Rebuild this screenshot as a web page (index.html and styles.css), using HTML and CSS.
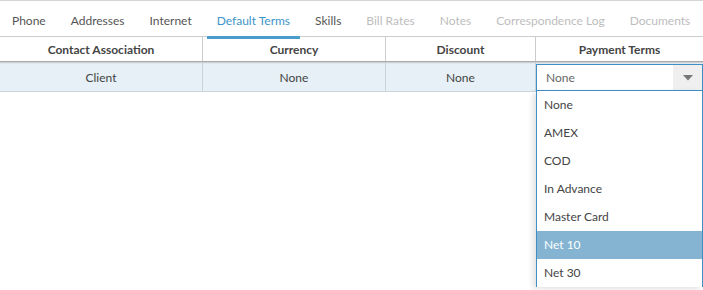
FILE: index.html
```html
<!DOCTYPE html>
<html>
<head>
<meta charset="utf-8">
<link rel="stylesheet" href="styles.css">
</head>
<body>
<div class="page">
  <nav class="tabs">
    <span class="tab">Phone</span>
    <span class="tab">Addresses</span>
    <span class="tab">Internet</span>
    <span class="tab active">Default Terms</span>
    <span class="tab">Skills</span>
    <span class="tab disabled">Bill Rates</span>
    <span class="tab disabled">Notes</span>
    <span class="tab disabled">Correspondence Log</span>
    <span class="tab disabled">Documents</span>
  </nav>
  <div class="grid">
    <div class="head">
      <div class="cell">Contact Association</div>
      <div class="cell">Currency</div>
      <div class="cell">Discount</div>
      <div class="cell">Payment Terms</div>
    </div>
    <div class="row">
      <div class="cell">Client</div>
      <div class="cell">None</div>
      <div class="cell">None</div>
      <div class="cell editor">
        <div class="select">
          <span class="value">None</span>
          <span class="arrow"><svg width="10" height="6" viewBox="0 0 10 6"><path d="M0 0H10L5 5.5Z" fill="#777"/></svg></span>
        </div>
        <ul class="list">
          <li>None</li>
          <li>AMEX</li>
          <li>COD</li>
          <li>In Advance</li>
          <li>Master Card</li>
          <li class="hover">Net 10</li>
          <li>Net 30</li>
        </ul>
      </div>
    </div>
  </div>
</div>
</body>
</html>
```
FILE: styles.css
```css
html, body {
  margin: 0;
  padding: 0;
  background: #fff;
}
body {
  font-family: Lato, "Liberation Sans", sans-serif;
  font-size: 12px;
  color: #444;
  width: 703px;
  height: 290px;
  overflow: hidden;
}
.page {
  border-top: 1px solid #d4d4d4;
}
.tabs {
  display: flex;
  height: 35px;
  border-bottom: 1px solid #cccccc;
  padding-left: 2px;
  gap: 5px;
}
.tab {
  display: flex;
  align-items: center;
  padding: 4px 10px 0;
  color: #555;
  height: 31px;
  border-bottom: 3px solid transparent;
  margin-bottom: -1px;
  white-space: nowrap;
}
.tab.active {
  color: #3d94c8;
  border-bottom-color: #4a9ccd;
}
.tab.disabled {
  color: #bdbdbd;
}
.head, .row {
  display: grid;
  grid-template-columns: 202px 183px 150px 168px;
}
.head {
  height: 24px;
  border-bottom: 1px solid #a9a9a9;
  box-shadow: 0 1px 1px rgba(0,0,0,0.18);
  font-weight: bold;
  color: #444;
  position: relative;
  z-index: 1;
}
.head .cell {
  display: flex;
  align-items: center;
  justify-content: center;
}
.cell + .cell {
  border-left: 1px solid #cccccc;
}
.row {
  height: 28px;
  margin-top: 1px;
  background: #e6f0f6;
  border-bottom: 1px solid #cdd5da;
}
.row .cell {
  display: flex;
  align-items: center;
  justify-content: center;
  color: #444;
}
.row .cell + .cell {
  border-left-color: #c9d3d8;
}
.editor {
  position: relative;
  align-items: flex-start !important;
  justify-content: flex-start !important;
}
.select {
  box-sizing: border-box;
  width: 167px;
  height: 27px;
  margin-top: 1px;
  border: 1px solid #3f8fc6;
  background: #fff;
  display: flex;
  align-items: center;
  justify-content: space-between;
}
.value {
  padding-left: 9px;
  color: #666;
}
.arrow {
  width: 29px;
  height: 100%;
  background: #efefef;
  display: flex;
  align-items: center;
  justify-content: center;
}
.list {
  position: absolute;
  left: 0;
  top: 28px;
  width: 167px;
  box-sizing: border-box;
  margin: 0;
  padding: 0;
  list-style: none;
  background: #fff;
  border-left: 1px solid #3f8fc6;
  border-right: 1px solid #3f8fc6;
  box-shadow: -3px 2px 6px rgba(0,0,0,0.12);
  z-index: 5;
}
.list li {
  height: 28px;
  line-height: 28px;
  padding-left: 7px;
  color: #444;
}
.list li.hover {
  background: #84b4d2;
  color: #fff;
}
```
